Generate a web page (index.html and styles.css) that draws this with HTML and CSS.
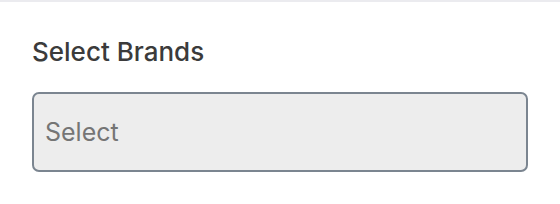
FILE: index.html
```html
<!DOCTYPE html>
<html lang="en">
<head>
    <meta charset="UTF-8">
    <title>Select Brands</title>
    <link rel="stylesheet" href="styles.css">
</head>
<body>
    <div class="panel">
        <label class="field-label" for="brands">Select Brands</label>
        <div class="select-box" id="brands">
            <span class="placeholder">Select</span>
        </div>
    </div>
</body>
</html>
```

FILE: styles.css
```css
* {
    margin: 0;
    padding: 0;
    box-sizing: border-box;
}

body {
    font-family: Inter, "Liberation Sans", sans-serif;
    background: #fff;
    border-top: 2px solid #ebebef;
}

.panel {
    padding: 35px 32px 0 32px;
}

.field-label {
    display: block;
    font-size: 26px;
    font-weight: 500;
    line-height: 30px;
    color: #3b3b3b;
    margin-bottom: 25px;
}

.select-box {
    height: 80px;
    background: #ededed;
    border: 2px solid #7b8590;
    border-radius: 7px;
    display: flex;
    align-items: center;
    padding-left: 11px;
}

.placeholder {
    font-size: 25px;
    color: #757575;
}
```
